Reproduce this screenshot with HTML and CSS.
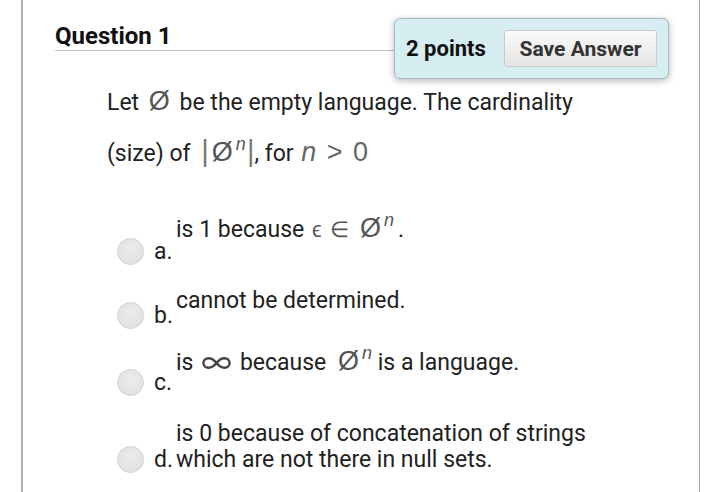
FILE: index.html
```html
<!DOCTYPE html>
<html>
<head>
<meta charset="utf-8">
<link rel="stylesheet" href="styles.css">
</head>
<body>
<div class="page">
  <div class="header">
    <h2 class="title">Question 1</h2>
    <div class="points-box">
      <span class="points">2 points</span>
      <button class="save">Save Answer</button>
    </div>
  </div>
  <p class="question">Let <span class="m empty sp">Ø</span> be the empty language. The cardinality<br>(size) of <span class="m bar">|</span><span class="m empty">Ø</span><sup class="m sup">n</sup><span class="m bar">|</span>, for <span class="m light"><i>n</i> &gt; 0</span></p>
  <div class="options">
    <div class="opt opt-a">
      <span class="radio"></span><span class="label">a.</span>
      <div class="text">is 1 because <span class="m sym">ϵ ∈ <span class="empty">Ø</span></span><sup class="m sup">n</sup><span class="dot">.</span></div>
    </div>
    <div class="opt opt-b">
      <span class="radio"></span><span class="label">b.</span>
      <div class="text">cannot be determined.</div>
    </div>
    <div class="opt opt-c">
      <span class="radio"></span><span class="label">c.</span>
      <div class="text">is <svg class="inf" width="29" height="12" viewBox="0 0 29 12"><path d="M14.5 6 C11 1.5 8.5 1.3 6.5 1.3 C3.5 1.3 1.4 3.4 1.4 6 C1.4 8.6 3.5 10.7 6.5 10.7 C8.5 10.7 11 10.5 14.5 6 C18 1.5 20.5 1.3 22.5 1.3 C25.5 1.3 27.6 3.4 27.6 6 C27.6 8.6 25.5 10.7 22.5 10.7 C20.5 10.7 18 10.5 14.5 6 Z" fill="none" stroke="#444" stroke-width="2.4"/></svg> because <span class="m empty sp-l">Ø</span><sup class="m sup">n</sup> is a language.</div>
    </div>
    <div class="opt opt-d">
      <span class="radio"></span><span class="label">d.</span>
      <div class="text">is 0 because of concatenation of strings<br>which are not there in null sets.</div>
    </div>
  </div>
</div>
</body>
</html>
```
FILE: styles.css
```css
html, body {
  margin: 0;
  padding: 0;
  background: #fff;
}
body {
  font-family: Roboto, "Liberation Sans", sans-serif;
  color: #222;
}
.page {
  margin-left: 21px;
  width: 644px;
  height: 492px;
  border-left: 2px solid #b0b0b0;
  border-right: 1px solid #a8a8a8;
  padding-left: 32px;
  box-sizing: content-box;
}
.header {
  display: flex;
  align-items: flex-start;
}
.title {
  flex: 1;
  margin: 22px 0 0 0;
  font-size: 24px;
  line-height: 28px;
  font-weight: 700;
  color: #111;
  border-bottom: 1px solid #c4c4c4;
}
.points-box {
  margin-top: 18px;
  margin-right: 30px;
  width: 275px;
  height: 61px;
  box-sizing: border-box;
  padding: 11px 11px;
  display: flex;
  align-items: center;
  justify-content: space-between;
  background: #d6edf1;
  border: 1px solid #a6bcc1;
  border-radius: 6px;
  box-shadow: 0 2px 7px rgba(0, 0, 0, 0.28);
}
.points {
  font-size: 22px;
  font-weight: 700;
  color: #111;
}
.save {
  width: 153px;
  height: 37px;
  font-family: Roboto, "Liberation Sans", sans-serif;
  font-size: 21px;
  font-weight: 700;
  color: #333;
  background: linear-gradient(#fafafa, #e4e4e4);
  border: 1px solid #c9c9c9;
  border-radius: 3px;
  padding: 0;
}
.question {
  margin: -2px 0 0 0;
  padding-left: 52px;
  font-size: 23px;
  line-height: 49px;
}
.m {
  font-family: "Liberation Sans", Arial, sans-serif;
  color: #555;
}
.empty {
  font-size: 27px;
  color: #555;
}
.sp {
  margin: 0 4px;
}
.sp-l {
  margin-left: 6px;
}
.sym {
  margin-left: 2px;
  font-size: 22px;
  word-spacing: 2px;
}
.sym .empty {
  margin-left: 3px;
}
.sup {
  font-size: 18px;
  font-style: italic;
  line-height: 0;
  vertical-align: 11px;
  margin-left: 3px;
  color: #555;
}
.dot {
  margin-left: 4px;
}
.bar {
  font-size: 29px;
  color: #777;
  font-weight: 300;
  margin: 0 3px 0 5px;
}
.sup + .bar {
  margin: 0 0 0 1px;
}
.light {
  color: #666;
  font-size: 27px;
  word-spacing: 3px;
  margin-left: 2px;
}
.inf {
  margin: 0 3px;
  vertical-align: 1px;
}
.options {
  margin-top: 37px;
}
.opt {
  display: flex;
  align-items: flex-end;
  font-size: 23px;
  line-height: 26px;
}
.radio {
  margin-left: 62px;
  width: 27px;
  height: 27px;
  box-sizing: border-box;
  border-radius: 50%;
  border: 1px solid #d2d2d2;
  background: radial-gradient(circle at 50% 40%, #ececec, #dedede);
  flex: none;
}
.label {
  margin-left: 10px;
  width: 22px;
  flex: none;
}
.text {
  flex: none;
}
.opt-a .text { padding-bottom: 22px; }
.opt-b { margin-top: 23px; }
.opt-b .text { padding-bottom: 15px; }
.opt-c { margin-top: 19px; }
.opt-c .text { padding-bottom: 20px; }
.opt-d { margin-top: 25px; }
```
